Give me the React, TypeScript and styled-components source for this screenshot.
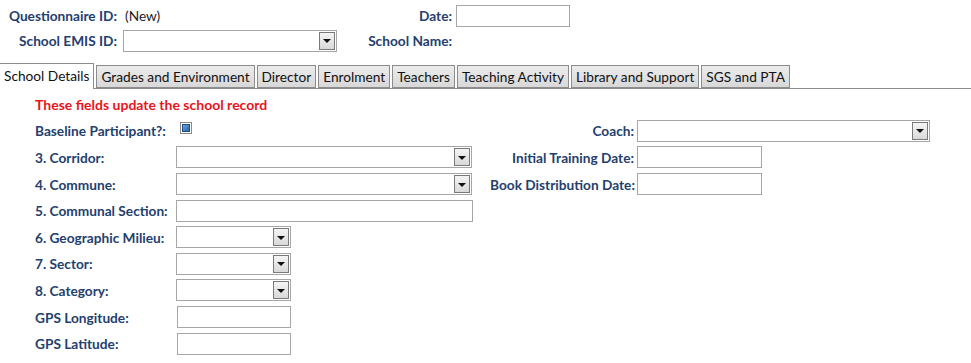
import React from 'react'
import styled, { createGlobalStyle } from 'styled-components'

const GlobalStyle = createGlobalStyle`
	html, body {
		margin: 0;
		padding: 0;
		background: #ffffff;
	}
	body {
		font-family: Lato, 'Open Sans', sans-serif;
		font-size: 13.7px;
		color: #222;
	}
`

const labelBlue = '#24406e'

const Page = styled.div`
	width: 971px;
	height: 363px;
	overflow: hidden;
`

const Header = styled.div`
	display: grid;
	grid-template-columns: 117px 213px 122px 120px;
	grid-template-rows: 25px 25px;
	padding-top: 3px;
	align-items: center;
`

const Label = styled.span`
	font-weight: bold;
	color: ${labelBlue};
	white-space: nowrap;
`

const RightLabel = styled(Label)`
	text-align: right;
`

const Value = styled.span`
	padding-left: 8px;
	color: #222;
`

const TextBox = styled.div<{ $width: number; $ml?: number }>`
	box-sizing: border-box;
	width: ${({ $width }) => $width}px;
	height: 22px;
	margin-left: ${({ $ml }) => $ml || 0}px;
	border: 1px solid #a6a6a6;
	background: #fff;
`

const ComboShell = styled.div<{ $width: number; $ml?: number }>`
	box-sizing: border-box;
	display: flex;
	justify-content: flex-end;
	align-items: center;
	width: ${({ $width }) => $width}px;
	height: 22px;
	margin-left: ${({ $ml }) => $ml || 0}px;
	border: 1px solid #a6a6a6;
	background: #fff;
	padding-right: 1px;
`

const ComboButton = styled.div`
	box-sizing: border-box;
	display: flex;
	align-items: center;
	justify-content: center;
	width: 16px;
	height: 18px;
	border: 1px solid #7a7a7a;
	background: linear-gradient(#f4f4f4, #d9d9d9);
`

const Arrow = styled.span`
	width: 0;
	height: 0;
	border-left: 4px solid transparent;
	border-right: 4px solid transparent;
	border-top: 4px solid #111;
	margin-top: 1px;
`

const Combo = ({ width, ml }: { width: number; ml?: number }) => (
	<ComboShell $width={width} $ml={ml}>
		<ComboButton>
			<Arrow />
		</ComboButton>
	</ComboShell>
)

const TabStrip = styled.div`
	display: flex;
	align-items: flex-end;
	margin-top: 10px;
	height: 25px;
	border-bottom: 1px solid #8c8c8c;
	gap: 2px;
`

const Tab = styled.div<{ $active?: boolean }>`
	box-sizing: border-box;
	height: ${({ $active }) => ($active ? 26 : 23)}px;
	margin-bottom: ${({ $active }) => ($active ? -1 : 0)}px;
	padding: 0 4px;
	padding-bottom: ${({ $active }) => ($active ? 2 : 0)}px;
	display: flex;
	align-items: center;
	font-size: 13.7px;
	color: #111;
	background: ${({ $active }) =>
		$active ? '#fff' : 'linear-gradient(#ececec, #d8d8d8)'};
	border: 1px solid #8c8c8c;
	border-left: ${({ $active }) => ($active ? 'none' : '1px solid #8c8c8c')};
	border-bottom: ${({ $active }) => ($active ? 'none' : '1px solid #8c8c8c')};
`

const Body = styled.div`
	display: grid;
	grid-template-columns: 141px 314px 144px auto;
	grid-auto-rows: 26.6px;
	align-items: center;
	padding-left: 35px;
	padding-top: 2px;
`

const Notice = styled.div`
	grid-column: 1 / -1;
	color: #e8141b;
	font-weight: bold;
	font-size: 14px;
`

const Checkbox = styled.div`
	box-sizing: border-box;
	width: 12px;
	height: 12px;
	margin-left: 4px;
	margin-top: -6px;
	border: 1px solid #8a8a8a;
	background: #fff;
	padding: 1px;
`

const CheckInner = styled.div`
	width: 8px;
	height: 8px;
	box-sizing: border-box;
	border: 1px solid #1d4f86;
	background: linear-gradient(135deg, #6aa6dc, #2466a8);
`

const tabs = [
	'School Details',
	'Grades and Environment',
	'Director',
	'Enrolment',
	'Teachers',
	'Teaching Activity',
	'Library and Support',
	'SGS and PTA'
]

const Empty = () => <span />

export default function App() {
	return (
		<Page>
			<GlobalStyle />
			<Header>
				<RightLabel>Questionnaire ID:</RightLabel>
				<Value>(New)</Value>
				<RightLabel>Date:</RightLabel>
				<TextBox $width={114} $ml={4} />
				<RightLabel>School EMIS ID:</RightLabel>
				<Combo width={214} ml={6} />
				<RightLabel>School Name:</RightLabel>
				<Empty />
			</Header>
			<TabStrip>
				{tabs.map((t, i) => (
					<Tab key={t} $active={i === 0}>
						{t}
					</Tab>
				))}
			</TabStrip>
			<Body>
				<Notice>These fields update the school record</Notice>

				<Label>Baseline Participant?:</Label>
				<Checkbox>
					<CheckInner />
				</Checkbox>
				<RightLabel>Coach:</RightLabel>
				<Combo width={293} ml={3} />

				<Label>3. Corridor:</Label>
				<Combo width={296} />
				<RightLabel>Initial Training Date:</RightLabel>
				<TextBox $width={125} $ml={3} />

				<Label>4. Commune:</Label>
				<Combo width={296} />
				<RightLabel>Book Distribution Date:</RightLabel>
				<TextBox $width={125} $ml={3} />

				<Label>5. Communal Section:</Label>
				<TextBox $width={297} />
				<Empty />
				<Empty />

				<Label>6. Geographic Milieu:</Label>
				<Combo width={115} />
				<Empty />
				<Empty />

				<Label>7. Sector:</Label>
				<Combo width={115} />
				<Empty />
				<Empty />

				<Label>8. Category:</Label>
				<Combo width={115} />
				<Empty />
				<Empty />

				<Label>GPS Longitude:</Label>
				<TextBox $width={114} $ml={1} />
				<Empty />
				<Empty />

				<Label>GPS Latitude:</Label>
				<TextBox $width={114} $ml={1} />
				<Empty />
				<Empty />
			</Body>
		</Page>
	)
}
